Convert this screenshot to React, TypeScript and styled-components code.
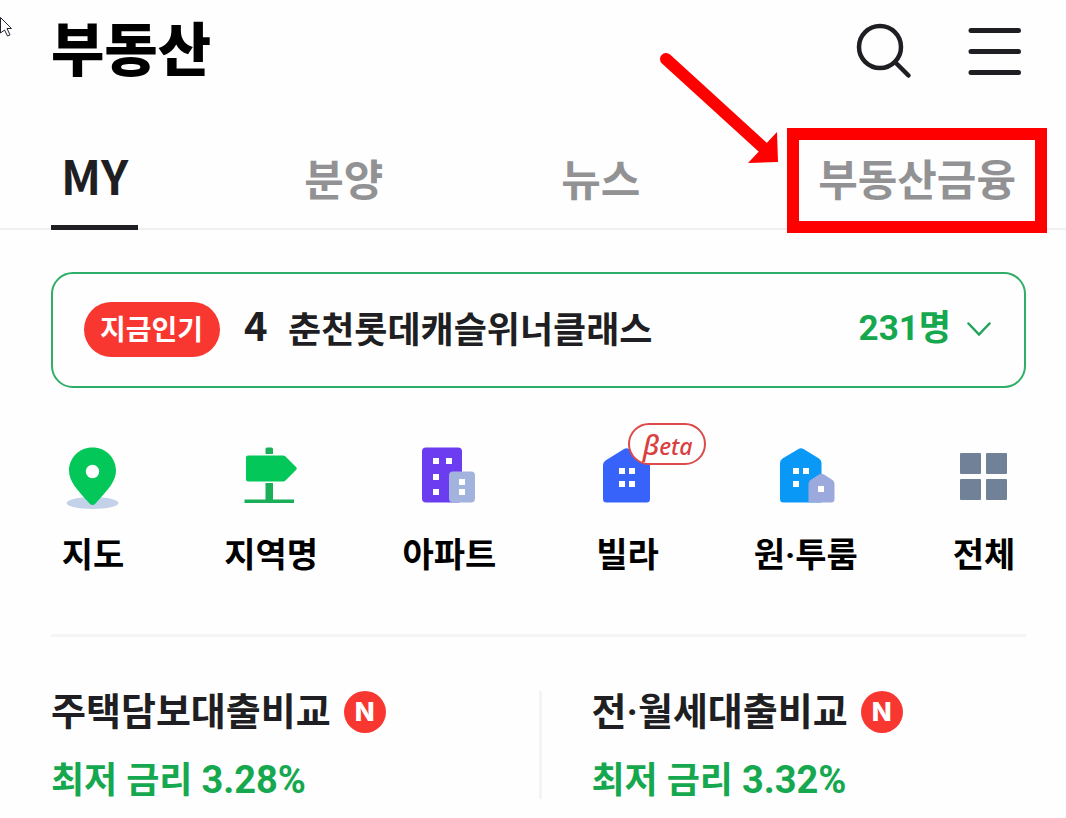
import React from "react";
import styled, { createGlobalStyle } from "styled-components";

const GlobalStyle = createGlobalStyle`
  * { box-sizing: border-box; }
  body {
    margin: 0;
    background: #fefefe;
    color: #1e1e23;
    font-family: Roboto, "Noto Sans CJK KR", sans-serif;
    font-weight: 700;
  }
  h1, h2, p, ul { margin: 0; padding: 0; }
  a { color: inherit; text-decoration: none; }
  button { padding: 0; border: 0; background: none; font: inherit; color: inherit; cursor: pointer; }
  svg { display: block; }
`;

const Page = styled.div`
  position: relative;
  overflow: hidden;
  padding-bottom: 20px;
`;

const Pointer = styled.svg`
  position: absolute;
  left: 0;
  top: 16px;
`;

const Header = styled.header`
  display: flex;
  align-items: center;
  justify-content: space-between;
  height: 102px;
  padding: 0 40px 0 51px;
`;

const Title = styled.h1`
  font-size: 58px;
  font-weight: 900;
  line-height: 80px;
  color: #000;
`;

const Tools = styled.div`
  display: flex;
  gap: 54px;
`;

const Tabs = styled.nav`
  display: flex;
  justify-content: space-between;
  margin-top: 26px;
  padding: 0 38px 0 51px;
  border-bottom: 2px solid #f0f0f0;
`;

const Tab = styled.a<{ $active?: boolean }>`
  position: relative;
  height: 102px;
  margin-bottom: -2px;
  padding: 0 ${(p) => (p.$active ? 10 : 12)}px;
  border-bottom: 5px solid ${(p) => (p.$active ? "#1e1e23" : "transparent")};
  font-family: "Noto Sans CJK KR", sans-serif;
  font-size: ${(p) => (p.$active ? 47 : 43)}px;
  line-height: ${(p) => (p.$active ? 94 : 98)}px;
  white-space: nowrap;
  color: ${(p) => (p.$active ? "#1e1e23" : "#929294")};
`;

const Highlight = styled.span`
  position: absolute;
  inset: 0 -19px -8px;
  border: 12px solid #fe0000;
`;

const Arrow = styled.svg`
  position: absolute;
  right: 100%;
  top: -80px;
  margin-right: 19px;
`;

const Main = styled.main`
  padding: 42px 40px 0 51px;
`;

const Popular = styled.button`
  display: flex;
  align-items: center;
  width: 100%;
  height: 116px;
  padding: 0 33px 2px 31px;
  border: 2px solid #2eae66;
  border-radius: 22px;
  font-weight: 700;
  text-align: left;
`;

const PopularBadge = styled.span`
  height: 55px;
  padding: 0 17px 0 16px;
  border-radius: 28px;
  background: #f93731;
  color: #fff;
  font-size: 28px;
  line-height: 58px;
`;

const Rank = styled.span`
  width: 44px;
  margin-left: 24px;
  font-family: "Noto Sans CJK KR", sans-serif;
  font-size: 40px;
  line-height: 44px;
  padding-bottom: 10px;
`;

const ComplexName = styled.span`
  flex: 1;
  padding-top: 4px;
  font-size: 36px;
  line-height: 48px;
`;

const Viewers = styled.span`
  margin-right: 16px;
  font-size: 35px;
  line-height: 48px;
  color: #16a84f;
`;

const Categories = styled.ul`
  display: flex;
  justify-content: space-between;
  padding: 52px 0 55px;
  border-bottom: 3px solid #f5f5f6;
  list-style: none;
`;

const Category = styled.li`
  width: 84px;
`;

const CategoryLink = styled.a`
  position: relative;
  display: flex;
  flex-direction: column;
  align-items: center;
  gap: 17px;
  color: #000;
  font-size: 34px;
  line-height: 48px;
  white-space: nowrap;
`;

const BetaBadge = styled.span`
  position: absolute;
  left: 42px;
  top: -17px;
  width: 78px;
  height: 42px;
  padding-left: 2px;
  border: 2px solid #dc4a4a;
  border-radius: 21px;
  background: #fff;
  color: #d9403f;
  font: italic 500 23px/38px "Noto Sans", sans-serif;
  text-align: center;
`;

const Beta = styled.span`
  font-size: 28px;
`;

const Loans = styled.section`
  display: grid;
  grid-template-columns: 1fr 1fr;
  padding-top: 54px;
`;

const Loan = styled.a`
  height: 108px;
  & + & {
    padding-left: 50px;
    border-left: 3px solid #f3f4f7;
  }
`;

const LoanTitle = styled.h2`
  display: flex;
  align-items: center;
  gap: 13px;
  font-size: 38px;
  line-height: 42px;
  white-space: nowrap;
`;

const NewMark = styled.span`
  width: 42px;
  height: 42px;
  border-radius: 50%;
  background: #f93731;
  color: #fff;
  font-family: Inter, sans-serif;
  font-size: 26px;
  font-weight: 800;
  line-height: 42px;
  text-align: center;
`;

const Rate = styled.p`
  margin-top: 23px;
  font-size: 36px;
  line-height: 48px;
  color: #16a84f;
`;

const Percent = styled.span`
  font-size: 38px;
`;

const IconSvg = ({ children }: { children: React.ReactNode }) => (
  <svg width="84" height="74" viewBox="0 0 84 74" aria-hidden="true">{children}</svg>
);

const Windows = ({ at }: { at: number[][] }) => (
  <>
    {at.map(([x, y]) => (
      <rect key={`${x}-${y}`} x={x} y={y} width="6" height="6" fill="#fff" />
    ))}
  </>
);

const MapIcon = () => (
  <IconSvg>
    <ellipse cx="41.500" cy="63" rx="26" ry="6" fill="#c3d2e9" />
    <path d="M41.500 7.500C28 7.500 18 18 18 30.500c0 11 8 19 20.500 33q3 3 6 0C57 49.500 65 41.500 65 30.500 65 18 55 7.500 41.500 7.500Z" fill="#04c75a" />
    <circle cx="41.500" cy="31.500" r="6.700" fill="#fff" />
  </IconSvg>
);

const SignIcon = () => (
  <IconSvg>
    <path d="M36.500 9q0-1.500 1.500-1.500h4.500q1.500 0 1.500 1.500v5H36.500ZM36.500 43H44v16.500H65V63H15.500v-3.500h21Z" fill="#1aae58" />
    <path d="M19 15.500h35q1.500 0 2.500 1l10.500 10.500q1.500 1.500 0 3L56.500 40.500q-1 1-2.500 1H19q-2 0-2-2v-22q0-2 2-2Z" fill="#04c75a" />
  </IconSvg>
);

const ApartmentIcon = () => (
  <IconSvg>
    <rect x="15" y="7.500" width="40" height="55" rx="4" fill="#6c3cf0" />
    <rect x="42" y="31.500" width="26" height="31" rx="4" fill="#a2b3de" />
    <Windows at={[[26, 18], [39, 18], [26, 34], [26, 49], [52, 39], [52, 49]]} />
  </IconSvg>
);

const VillaIcon = () => (
  <IconSvg>
    <path d="M17 25q0-3 2.500-4.500L38 9q2.500-1.500 5 0l18.500 11.500Q64 22 64 25v34q0 3.500-3.500 3.500h-40Q17 62.500 17 59Z" fill="#3763fa" />
    <Windows at={[[33, 28], [43, 28], [33, 41], [43, 41]]} />
  </IconSvg>
);

const RoomIcon = () => (
  <IconSvg>
    <path d="M16 23q0-3 2.500-4.500L34.500 9q2.500-1.500 5 0L55 18.500q2.500 1.500 2.500 4.500v39.500h-38Q16 62.500 16 59Z" fill="#0a98f7" />
    <path d="M44.500 44q0-2.500 2-4L55 34.500q2.500-1.500 5 0l8.500 5.500q2 1.500 2 4v15q0 3.500-3.500 3.500H44.500Z" fill="#9ba9dc" />
    <Windows at={[[29, 28], [39, 28], [29, 41], [54, 46]]} />
  </IconSvg>
);

const AllIcon = () => (
  <IconSvg>
    {[[18, 13], [44, 13], [18, 39], [44, 39]].map(([x, y]) => (
      <rect key={`${x}-${y}`} x={x} y={y} width="21" height="21" rx="1" fill="#718198" />
    ))}
  </IconSvg>
);

const categories = [
  { label: "지도", Icon: MapIcon },
  { label: "지역명", Icon: SignIcon },
  { label: "아파트", Icon: ApartmentIcon },
  { label: "빌라", Icon: VillaIcon, beta: true },
  { label: "원·투룸", Icon: RoomIcon },
  { label: "전체", Icon: AllIcon },
];

const loans = [
  { title: "주택담보대출비교", rate: "3.28%" },
  { title: "전·월세대출비교", rate: "3.32%" },
];

export default function App() {
  return (
    <>
      <GlobalStyle />
      <Page>
        <Header>
          <Title>부동산</Title>
          <Tools>
            <button type="button" aria-label="검색">
              <svg width="60" height="60" viewBox="0 0 60 60" fill="none" stroke="#1e1e23" strokeWidth="4.500" strokeLinecap="round">
                <circle cx="28" cy="26" r="21" />
                <path d="M43.500 41.500 56.500 54.500" />
              </svg>
            </button>
            <button type="button" aria-label="메뉴">
              <svg width="60" height="60" viewBox="0 0 60 60" fill="none" stroke="#1e1e23" strokeWidth="5" strokeLinecap="round">
                <path d="M5 9.500h47.500M5 30.500h47.500M5 51.500h47.500" />
              </svg>
            </button>
          </Tools>
        </Header>
        <Tabs>
          <Tab href="#my" $active>MY</Tab>
          <Tab href="#sale">분양</Tab>
          <Tab href="#news">뉴스</Tab>
          <Tab href="#finance">
            부동산금융
            <Highlight />
            <Arrow width="130" height="120" viewBox="0 0 130 120" aria-hidden="true">
              <path d="M9 11 112 105" stroke="#fe0000" strokeWidth="12" strokeLinecap="round" />
              <path d="M120 84 121 114 91 115Z" fill="#fe0000" />
            </Arrow>
          </Tab>
        </Tabs>
        <Main>
          <Popular type="button">
            <PopularBadge>지금인기</PopularBadge>
            <Rank>4</Rank>
            <ComplexName>춘천롯데캐슬위너클래스</ComplexName>
            <Viewers>231명</Viewers>
            <svg width="24" height="16" viewBox="0 0 24 16" fill="none" stroke="#22a35a" strokeWidth="2.500" strokeLinecap="round" aria-hidden="true">
              <path d="M1.500 2.500 12 13.500 22.500 2.500" />
            </svg>
          </Popular>
          <Categories>
            {categories.map(({ label, Icon, beta }) => (
              <Category key={label}>
                <CategoryLink href="#category">
                  <Icon />
                  {label}
                  {beta && <BetaBadge><Beta>β</Beta>eta</BetaBadge>}
                </CategoryLink>
              </Category>
            ))}
          </Categories>
          <Loans>
            {loans.map(({ title, rate }) => (
              <Loan href="#loan" key={title}>
                <LoanTitle>{title}<NewMark>N</NewMark></LoanTitle>
                <Rate>최저 금리 <Percent>{rate}</Percent></Rate>
              </Loan>
            ))}
          </Loans>
        </Main>
        <Pointer width="14" height="22" viewBox="0 0 14 22" aria-hidden="true">
          <path d="M.5 1.500 11.500 12.500H7L10 19 7.500 20 4.500 14 .5 17Z" fill="#fff" stroke="#222233" />
        </Pointer>
      </Page>
    </>
  );
}
